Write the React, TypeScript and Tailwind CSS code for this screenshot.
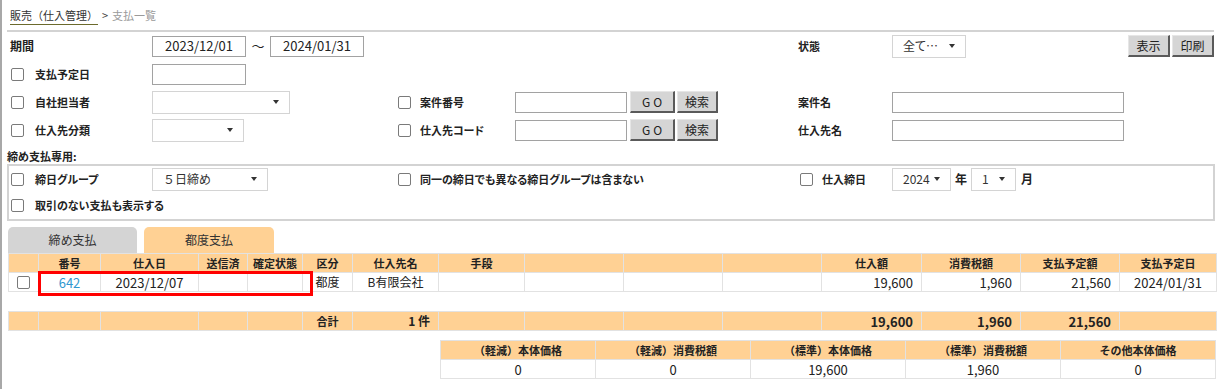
import { ReactNode } from "react";

const FONT = "font-['Noto_Sans_CJK_JP',sans-serif] [font-feature-settings:'palt']";
const NOPALT = "[font-feature-settings:normal]";
const ORANGE = "bg-[#ffd194]";

const Check = () => (
  <span className="inline-block w-[13px] h-[13px] shrink-0 border border-[#7a7a7a] rounded-[2px] bg-white" />
);

const Caret = () => (
  <span className="inline-block w-0 h-0 border-x-[3px] border-x-transparent border-t-[4px] border-t-[#333]" />
);

const Select = ({ w, value }: { w: string; value?: string }) => (
  <div className={`${w} h-[23px] shrink-0 border border-[#d4d4d4] bg-white flex items-center pl-[10px] pr-[10px] text-[12px] text-[#333]`}>
    <span className="flex-1">{value}</span>
    <Caret />
  </div>
);

const TextInput = ({ w, value }: { w: string; value?: string }) => (
  <div className={`${w} h-[21px] shrink-0 border border-[#a2a2a2] bg-white flex items-center justify-center text-[13px] text-[#222]`}>
    {value}
  </div>
);

const Btn = ({ w, children, className = "" }: { w: string; children: ReactNode; className?: string }) => (
  <div
    className={`${w} h-[22px] shrink-0 flex items-center justify-center bg-[#d5d5d5] border border-t-[#e6e6e6] border-l-[#e6e6e6] border-r-2 border-b-2 border-r-[#5a5a5a] border-b-[#5a5a5a] text-[12px] text-[#222] ${className}`}
  >
    {children}
  </div>
);

const CheckLabel = ({ w, label, gap = "ml-[11px]", pad = "pl-[3px]" }: { w: string; label: string; gap?: string; pad?: string }) => (
  <div className={`${w} shrink-0 flex items-center ${pad}`}>
    <Check />
    <span className={`${gap} font-bold whitespace-nowrap`}>{label}</span>
  </div>
);

const cols = [30, 62, 98, 49, 55, 50, 86, 86, 99, 99, 99, 100, 99, 99, 97];
const headers = ["", "番号", "仕入日", "送信済", "確定状態", "区分", "仕入先名", "手段", "", "", "", "仕入額", "消費税額", "支払予定額", "支払予定日"];

const cell = "border border-[#e2e2e2] h-[19px] p-0 leading-none";

export default function App() {
  return (
    <div className={`min-h-screen bg-white border-l-2 border-[#a8a8a8] pl-[6px] pr-[3px] text-[11px] text-[#222] ${FONT}`}>
      {/* breadcrumb */}
      <div className={`h-[30px] flex items-center pl-[2px] ${NOPALT}`}>
        <span className="text-[#333] underline decoration-[#6b6a2c] underline-offset-[4px]">販売（仕入管理）</span>
        <span className="ml-[4px] text-[#444]">&gt;</span>
        <span className="ml-[4px] text-[#9a9a9a]">支払一覧</span>
      </div>
      <div className="-ml-px mr-[2px] border-t-2 border-[#d3d3d3]" />

      {/* row 1 */}
      <div className="h-[28px] flex items-center">
        <div className="w-[144px] shrink-0 pl-[2px] font-bold text-[12px]">期間</div>
        <div className="w-[646px] shrink-0 flex items-center">
          <TextInput w="w-[94px]" value="2023/12/01" />
          <span className="w-[24px] text-center text-[13px]">～</span>
          <TextInput w="w-[94px]" value="2024/01/31" />
        </div>
        <div className="w-[94px] shrink-0 font-bold">状態</div>
        <Select w="w-[74px]" value="全て…" />
        <div className="flex-1" />
        <Btn w="w-[42px]">表示</Btn>
        <Btn w="w-[42px]" className="ml-[2px] mr-[2px]">印刷</Btn>
      </div>

      {/* row 2 */}
      <div className="h-[28px] flex items-center">
        <CheckLabel w="w-[144px]" label="支払予定日" />
        <TextInput w="w-[94px]" />
      </div>

      {/* row 3 */}
      <div className="h-[28px] flex items-center">
        <CheckLabel w="w-[144px]" label="自社担当者" />
        <div className="w-[246px] shrink-0">
          <Select w="w-[138px]" />
        </div>
        <CheckLabel w="w-[117px]" label="案件番号" gap="ml-[9px]" pad="" />
        <div className="w-[283px] shrink-0 flex items-center">
          <TextInput w="w-[112px]" />
          <Btn w="w-[45px]" className="ml-[3px] tracking-[3px] pl-[3px]">GO</Btn>
          <Btn w="w-[41px]" className="ml-[2px]">検索</Btn>
        </div>
        <div className="w-[94px] shrink-0 font-bold">案件名</div>
        <TextInput w="w-[232px]" />
      </div>

      {/* row 4 */}
      <div className="h-[28px] flex items-center">
        <CheckLabel w="w-[144px]" label="仕入先分類" />
        <div className="w-[246px] shrink-0">
          <Select w="w-[92px]" />
        </div>
        <CheckLabel w="w-[117px]" label="仕入先コード" gap="ml-[9px]" pad="" />
        <div className="w-[283px] shrink-0 flex items-center">
          <TextInput w="w-[112px]" />
          <Btn w="w-[45px]" className="ml-[3px] tracking-[3px] pl-[3px]">GO</Btn>
          <Btn w="w-[41px]" className="ml-[2px]">検索</Btn>
        </div>
        <div className="w-[94px] shrink-0 font-bold">仕入先名</div>
        <TextInput w="w-[232px]" />
      </div>

      {/* closing-only section */}
      <div className="h-[20px] flex items-center pt-[4px] -ml-px font-bold">締め支払専用:</div>
      <div className="-ml-px mr-px border-2 border-[#d3d3d3]">
        <div className="h-[26px] flex items-center">
          <CheckLabel w="w-[143px]" label="締日グループ" pad="pl-[2px]" />
          <div className={`w-[246px] shrink-0 ${NOPALT}`}>
            <Select w="w-[116px]" value="５日締め" />
          </div>
          <CheckLabel w="w-[402px]" label="同一の締日でも異なる締日グループは含まない" gap="ml-[9px]" pad="" />
          <CheckLabel w="w-[92px]" label="仕入締日" gap="ml-[9px]" pad="" />
          <Select w="w-[59px]" value="2024" />
          <span className="w-[20px] text-center font-bold text-[12px]">年</span>
          <Select w="w-[45px]" value="1" />
          <span className="ml-[5px] font-bold text-[12px]">月</span>
        </div>
        <div className="h-[27px] flex items-center">
          <CheckLabel w="w-[300px]" label="取引のない支払も表示する" pad="pl-[2px]" />
        </div>
      </div>

      {/* tabs */}
      <div className="mt-[6px] h-[26px] flex items-end text-[12px]">
        <div className="w-[129px] h-[26px] rounded-t-[5px] bg-[#d4d4d4] flex items-center justify-center text-[#333]">締め支払</div>
        <div className={`ml-[7px] w-[130px] h-[26px] rounded-t-[5px] ${ORANGE} flex items-center justify-center text-[#333]`}>都度支払</div>
      </div>

      {/* list */}
      <div className="relative w-[1208px]">
        <table className="border-collapse table-fixed w-[1208px]">
          <colgroup>
            {cols.map((c, i) => (
              <col key={i} style={{ width: c }} />
            ))}
          </colgroup>
          <thead>
            <tr className={ORANGE}>
              {headers.map((h, i) => (
                <th key={i} className={`${cell} font-bold text-center text-[#222]`}>
                  {h}
                </th>
              ))}
            </tr>
          </thead>
          <tbody>
            <tr className="bg-white">
              <td className={`${cell} text-center`}>
                <span className="inline-flex align-middle">
                  <Check />
                </span>
              </td>
              <td className={`${cell} text-center text-[#2f98d0] text-[13px]`}>642</td>
              <td className={`${cell} text-center text-[13px]`}>2023/12/07</td>
              <td className={cell} />
              <td className={cell} />
              <td className={`${cell} text-center text-[12px]`}>都度</td>
              <td className={`${cell} text-center text-[12px]`}>B有限会社</td>
              <td className={cell} />
              <td className={cell} />
              <td className={cell} />
              <td className={cell} />
              <td className={`${cell} text-right pr-[8px] text-[13px]`}>19,600</td>
              <td className={`${cell} text-right pr-[8px] text-[13px]`}>1,960</td>
              <td className={`${cell} text-right pr-[8px] text-[13px]`}>21,560</td>
              <td className={`${cell} text-center text-[13px]`}>2024/01/31</td>
            </tr>
          </tbody>
        </table>
        <div className="absolute left-[30px] top-[18px] w-[275px] h-[25px] border-[3px] border-[#ff0000]" />

        {/* totals */}
        <table className="mt-[19px] border-collapse table-fixed w-[1208px]">
          <colgroup>
            {cols.map((c, i) => (
              <col key={i} style={{ width: c }} />
            ))}
          </colgroup>
          <tbody>
            <tr className={`${ORANGE} font-bold`}>
              <td className={cell} />
              <td className={cell} />
              <td className={cell} />
              <td className={cell} />
              <td className={cell} />
              <td className={`${cell} text-center`}>合計</td>
              <td className={`${cell} text-right pr-[8px] text-[12px]`}>1 件</td>
              <td className={cell} />
              <td className={cell} />
              <td className={cell} />
              <td className={cell} />
              <td className={`${cell} text-right pr-[8px] text-[13px]`}>19,600</td>
              <td className={`${cell} text-right pr-[8px] text-[13px]`}>1,960</td>
              <td className={`${cell} text-right pr-[8px] text-[13px]`}>21,560</td>
              <td className={cell} />
            </tr>
          </tbody>
        </table>

        {/* tax summary */}
        <table className="mt-[9px] ml-[432px] border-collapse table-fixed w-[776px]">
          <thead>
            <tr className={ORANGE}>
              {["（軽減）本体価格", "（軽減）消費税額", "（標準）本体価格", "（標準）消費税額", "その他本体価格"].map((h) => (
                <th key={h} className={`${cell} font-bold text-center ${NOPALT}`}>
                  {h}
                </th>
              ))}
            </tr>
          </thead>
          <tbody>
            <tr className="bg-white">
              {["0", "0", "19,600", "1,960", "0"].map((v, i) => (
                <td key={i} className={`${cell} text-center text-[13px]`}>
                  {v}
                </td>
              ))}
            </tr>
          </tbody>
        </table>
      </div>
    </div>
  );
}
